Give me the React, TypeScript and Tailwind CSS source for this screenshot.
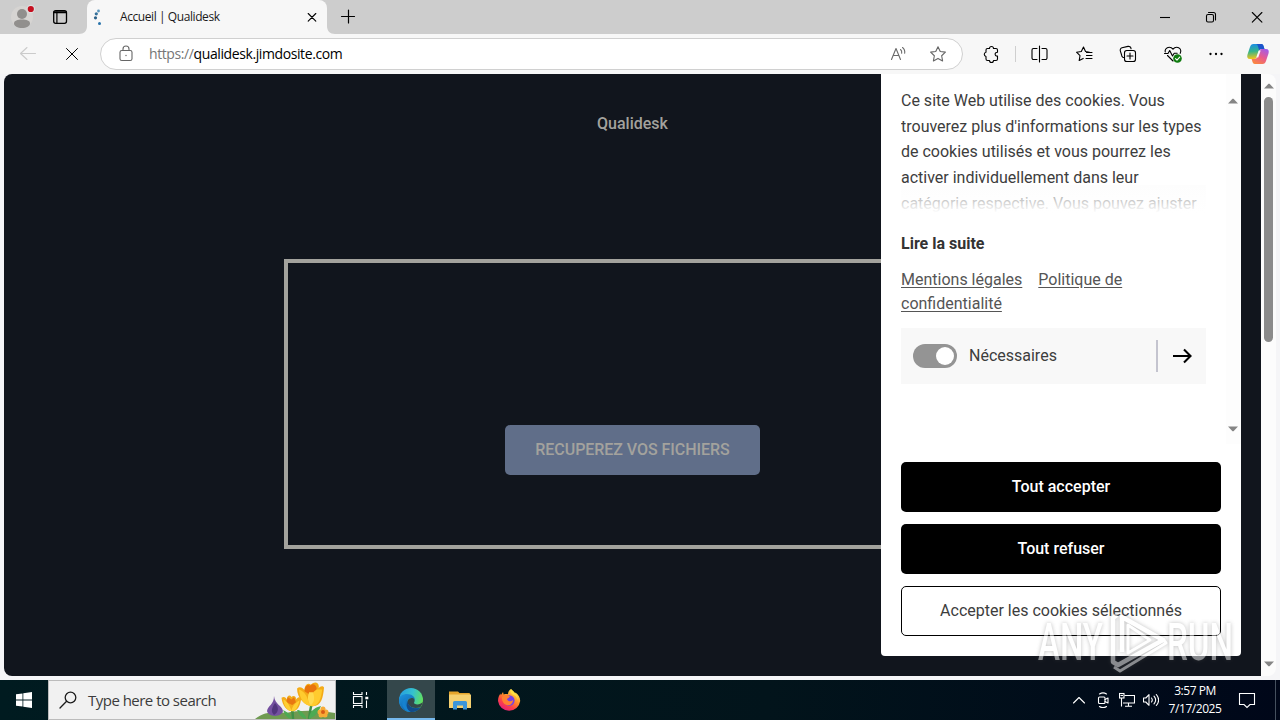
import React from 'react';

type IconProps = { children: React.ReactNode; size?: number; className?: string };

const sizes: Record<number, string> = {
  12: 'h-3 w-3',
  16: 'h-4 w-4',
  20: 'h-5 w-5',
  24: 'h-6 w-6',
  28: 'h-7 w-7',
};

function Icon({ children, size = 20, className = '' }: IconProps) {
  return (
    <svg
      viewBox={`0 0 ${size} ${size}`}
      className={`${sizes[size]} shrink-0 ${className}`}
      fill="none"
      stroke="currentColor"
      strokeWidth="1.1"
      strokeLinecap="round"
      strokeLinejoin="round"
    >
      {children}
    </svg>
  );
}

function Slot({ w, children }: { w: string; children?: React.ReactNode }) {
  return <div className={`flex h-full shrink-0 items-center justify-center ${w}`}>{children}</div>;
}

function TitleBar() {
  return (
    <div className="flex h-[34px] shrink-0 bg-[#cdcdcd]">
      <Slot w="w-11">
        <Icon size={28}>
          <circle cx="14" cy="14" r="11" fill="#d6d4d2" stroke="none" />
          <circle cx="14" cy="11" r="5" fill="#918f8d" stroke="none" />
          <path d="M6 20.500c0-3 3.500-4 8-4s8 1 8 4c0 2.500-3.500 4.500-8 4.500s-8-2-8-4.500z" fill="#918f8d" stroke="none" />
          <circle cx="22.800" cy="6" r="4.200" fill="#dedede" stroke="none" />
          <circle cx="22.800" cy="6" r="3.100" fill="#c50f1f" stroke="none" />
        </Icon>
      </Slot>
      <Slot w="w-8">
        <Icon size={16}>
          <rect x="1.700" y="1.700" width="12.800" height="12.600" rx="2" strokeWidth="1.300" />
          <path d="M2.200 3.200h11.800" strokeWidth="2" />
          <path d="M4.900 3v11" strokeWidth="1.200" />
        </Icon>
      </Slot>
      <div className="flex w-[11px] items-end">
        <svg viewBox="0 0 11 8" className="h-2 w-[11px]">
          <path d="M3 8c5 0 8-3 8-8v8z" fill="#f7f7f7" />
        </svg>
      </div>
      <div className="flex w-60 items-center rounded-t-lg bg-[#f7f7f7]">
        <Icon size={20} className="ml-0.5">
          <circle cx="9.500" cy="4" r="1.400" fill="#5b96bd" stroke="none" />
          <circle cx="7.300" cy="6.800" r="1.600" fill="#35719b" stroke="none" />
          <circle cx="6.500" cy="10.800" r="1.600" fill="#2b6189" stroke="none" />
          <circle cx="10.500" cy="16.500" r="1.500" fill="#2873ab" stroke="none" />
        </Icon>
        <span className="ml-[11px] flex-1 whitespace-nowrap font-['Open_Sans','Noto_Sans',sans-serif] text-[12px] tracking-[-0.42px] text-[#1a1a1a]">
          Accueil | Qualidesk
        </span>
        <Icon size={12} className="mr-[9px] text-black">
          <path d="M2.200 2.500l7.600 7.600M9.800 2.500l-7.600 7.600" />
        </Icon>
      </div>
      <div className="flex w-[9px] items-end">
        <svg viewBox="0 0 9 8" className="h-2 w-[9px]">
          <path d="M0 0c0 5 3 8 8 8H0z" fill="#f7f7f7" />
        </svg>
      </div>
      <Slot w="w-6">
        <Icon size={20} className="text-black">
          <path d="M3.500 9.500h13M10.500 3v13" strokeWidth="1.200" />
        </Icon>
      </Slot>
      <div className="flex-1" />
      <div className="flex text-black">
        <Slot w="w-[46px]">
          <Icon size={12}><path d="M1 6.500h10" strokeLinecap="butt" /></Icon>
        </Slot>
        <Slot w="w-[46px]">
          <Icon size={12}>
            <rect x="1.500" y="3.500" width="7" height="7.500" rx="1.500" />
            <path d="M3.500 1.500h5a2 2 0 0 1 2 2V9" />
          </Icon>
        </Slot>
        <Slot w="w-[46px]">
          <Icon size={12}><path d="M1.300 1.500l9.600 9.600M10.900 1.500l-9.600 9.600" /></Icon>
        </Slot>
      </div>
    </div>
  );
}

function Toolbar() {
  return (
    <div className="flex h-10 shrink-0 items-center bg-[#f7f7f7] text-[#1b1b1b]">
      <Slot w="w-14">
        <Icon className="text-[#cbcbcb]">
          <path d="M17.500 9.500H2.800M9 3.500l-6.500 6 6.500 6" />
        </Icon>
      </Slot>
      <Slot w="w-8">
        <Icon className="text-black"><path d="M4.500 4.500l11 11M15.500 4.500l-11 11" strokeWidth="1" /></Icon>
      </Slot>
      <div className="ml-3 flex h-8 w-[863px] items-center rounded-full border border-[#d0d0d0] bg-white text-[#666]">
        <Icon className="ml-[15px]">
          <rect x="4" y="6.500" width="12" height="10" rx="1.800" />
          <path d="M7 6.500V5a3 3 0 0 1 6 0v1.500" />
          <circle cx="10" cy="11.500" r="0.700" fill="currentColor" stroke="none" />
        </Icon>
        <span className="mb-px ml-[13px] flex-1 whitespace-nowrap font-['Open_Sans','Noto_Sans',sans-serif] text-[14px] tracking-[-0.4px] text-black">
          <span className="text-[#767676]">https://</span>qualidesk.jimdosite.com
        </span>
        <Icon className="text-[#6b6b6b]">
          <path d="M2.500 15.500L7 4.500l4.500 11M4.200 11.500h5.700" />
          <path d="M11.500 5.500c1 .8 1.400 2.300 1.200 3.800M13.500 3.500c1.800 1.300 2.500 3.500 2.200 5.800" />
        </Icon>
        <Icon className="ml-[19px] mr-[14px]">
          <path d="M10 2.700l2.250 4.750 5.150.7-3.750 3.600.95 5.150L10 14.400l-4.600 2.500.95-5.150L2.600 8.150l5.150-.7z" />
        </Icon>
      </div>
      <div className="ml-1.5 flex h-full items-center">
        <Slot w="w-11">
          <Icon className="text-black">
            <path d="M8.500 4.500a2 2 0 0 1 4 0h2.500a1.500 1.500 0 0 1 1.500 1.500v2.300h-.5a1.900 1.900 0 0 0 0 3.800h.5V15a1.500 1.500 0 0 1-1.500 1.500h-2.500a2 2 0 0 1-4 0H6.500A1.500 1.500 0 0 1 5 15v-2.500a2.200 2.200 0 0 1 0-4.300V6a1.500 1.500 0 0 1 1.500-1.500z" />
          </Icon>
        </Slot>
        <div className="mx-0.5 h-4 w-px bg-[#cfcfcf]" />
        <Slot w="w-11">
          <Icon className="text-black">
            <path d="M9.500 2v16M7 4.500H3.500A1.500 1.500 0 0 0 2 6v8a1.500 1.500 0 0 0 1.500 1.500H7M12 4.500h3.500A1.500 1.500 0 0 1 17 6v8a1.500 1.500 0 0 1-1.500 1.500H12" />
          </Icon>
        </Slot>
        <Slot w="w-11">
          <Icon className="text-black">
            <path d="M15.500 8.200l-4-.7L9.500 3 7.300 7.500l-4.800.7L6 11.600l-.8 4.900 4-2.100M12.500 8.500H18M12.500 11.500H18M12 14.500h6" />
          </Icon>
        </Slot>
        <Slot w="w-11">
          <Icon className="text-black">
            <path d="M5.500 13.500l-.7-.3A2.500 2.500 0 0 1 3.600 11L2.300 6.800A2.500 2.500 0 0 1 4 3.700l6-1.300a2.500 2.500 0 0 1 3 2v.3" />
            <rect x="6.500" y="6.500" width="11" height="11" rx="2.300" />
            <path d="M12 9v6M9 12h6" />
          </Icon>
        </Slot>
        <Slot w="w-[45px]">
          <Icon className="text-black">
            <path d="M10 5.200C8 2.500 4.500 2.600 2.800 5c-.7 1-.8 2-.6 3M10 5.200c2-2.700 5.500-2.600 7.200-.2.900 1.300.8 2.900 0 4.300M4.500 11.500L10 17" />
            <path d="M1.500 9.500H5l1.700-3L9.500 12l1.700-2.700h3" />
            <circle cx="14.500" cy="14.500" r="4.300" fill="#107c10" stroke="none" />
            <path d="M12.500 14.600l1.500 1.500 2.700-2.900" stroke="#fff" />
          </Icon>
        </Slot>
        <Slot w="w-[42px]">
          <Icon className="text-black">
            <g fill="currentColor" stroke="none">
              <circle cx="4.500" cy="10" r="1.150" />
              <circle cx="10" cy="10" r="1.150" />
              <circle cx="15.500" cy="10" r="1.150" />
            </g>
          </Icon>
        </Slot>
        <Slot w="w-[42px]">
          <Icon size={24}>
            <defs>
              <linearGradient id="copA" x1="0.200" y1="0" x2="0.300" y2="1">
                <stop offset="0" stopColor="#1a8de8" />
                <stop offset="0.500" stopColor="#35b58a" />
                <stop offset="1" stopColor="#f5c518" />
              </linearGradient>
              <linearGradient id="copB" x1="0.800" y1="0" x2="0.200" y2="1">
                <stop offset="0" stopColor="#a35be8" />
                <stop offset="0.500" stopColor="#ea5a8c" />
                <stop offset="1" stopColor="#fb8a3c" />
              </linearGradient>
            </defs>
            <path d="M7.500 2H15c2 0 2.300 1.300 2.900 3.500l.5 1.500h-3c-1.500 0-2.200.8-2.700 2.500l-1.200 4c-.7 2.400-1.300 3.500-3.500 3.500H4c-2.500 0-3.300-1.800-2.500-4.500L4 5c.7-2 1.500-3 3.500-3z" fill="url(#copA)" stroke="none" />
            <path d="M14 2h1.500c1.500 0 2 1.500 2.500 3.500l.5 1.500h-3c-1 0-1.800.3-2.300 1.500L12 4.500C11.700 3 11 2 10 2z" fill="#1c54cb" stroke="none" />
            <path d="M16.500 22H9c-2 0-2.300-1.300-2.900-3.500L5.600 17h3c1.500 0 2.200-.8 2.700-2.500l1.200-4C13.200 8.100 13.800 7 16 7h4c2.500 0 3.300 1.800 2.500 4.500L20 19c-.7 2-1.500 3-3.500 3z" fill="url(#copB)" stroke="none" />
            <path d="M12.700 8.500h2l-2.500 7h-2z" fill="#f7f7f7" stroke="none" />
          </Icon>
        </Slot>
      </div>
    </div>
  );
}

function Arrow({ down = false }: { down?: boolean }) {
  return (
    <svg viewBox="0 0 10 6" className={`h-1.5 w-2.5 ${down ? 'rotate-180' : ''}`}>
      <path d="M0 5.500L4.500 .7h1L10 5.500z" fill="#858585" />
    </svg>
  );
}

function CookiePanel() {
  return (
    <aside className="absolute right-5 top-0 flex h-[582px] w-[360px] flex-col rounded-b bg-white font-['Roboto',sans-serif] text-[16px] font-normal text-[#3d3d3d]">
      <div className="flex h-[370px]">
        <div className="flex w-[345px] flex-col pl-5">
          <div className="relative mt-[14px] h-[125px] w-[305px] overflow-hidden leading-[25.7px]">
            <p className="whitespace-nowrap">
              Ce site Web utilise des cookies. Vous<br />
              trouverez plus d'informations sur les types<br />
              de cookies utilisés et vous pourrez les<br />
              activer individuellement dans leur<br />
              catégorie respective. Vous pouvez ajuster
            </p>
            <div className="absolute inset-x-0 bottom-0 h-7 bg-gradient-to-b from-[#fafafa]/40 to-white" />
          </div>
          <span className="mt-[19px] font-bold leading-6 text-[#333]">Lire la suite</span>
          <p className="mt-3 w-[290px] leading-6 text-[#555]">
            <a className="mr-4 underline underline-offset-2">Mentions légales</a>
            <a className="underline underline-offset-2">Politique de<br />confidentialité</a>
          </p>
          <div className="mt-3 flex h-14 w-[305px] items-center bg-[#f8f8f8] pl-3">
            <div className="flex h-6 w-11 items-center justify-end rounded-full bg-[#949494] pr-[3px]">
              <div className="h-[18px] w-[18px] rounded-full bg-white" />
            </div>
            <span className="ml-3 flex-1">Nécessaires</span>
            <div className="h-8 w-0.5 bg-[#c4c4cf]" />
            <Icon size={24} className="ml-3 mr-3 text-black">
              <path d="M3 12h17M14 5.500l6.500 6.500-6.500 6.500" strokeWidth="2.100" strokeLinecap="butt" strokeLinejoin="miter" />
            </Icon>
          </div>
        </div>
        <div className="flex w-[15px] flex-col items-start justify-between bg-[#fdfdfd] pb-3 pl-0.5 pt-6">
          <Arrow />
          <Arrow down />
        </div>
      </div>
      <div className="flex flex-col gap-3 px-5 pt-[18px]">
        <button className="h-[50px] rounded-[5px] bg-black font-medium text-white">Tout accepter</button>
        <button className="h-[50px] rounded-[5px] bg-black font-medium text-white">Tout refuser</button>
        <button className="h-[50px] rounded-[5px] border border-black bg-white">Accepter les cookies sélectionnés</button>
      </div>
    </aside>
  );
}

function Viewport() {
  return (
    <div className="flex h-[606px] shrink-0 bg-[#f5f5f7] pb-1 pl-1 pr-1">
      <div className="flex w-full overflow-hidden rounded-lg">
        <main className="relative flex w-[1257px] flex-col items-center bg-[#11151d] font-['Roboto',sans-serif] text-[16px] font-medium text-[#a3a29d]">
          <span className="mt-[38px] leading-6">Qualidesk</span>
          <div className="mt-[123px] flex h-[290px] w-[697px] flex-col items-center border-4 border-[#a3a29d] pt-[162px]">
            <button className="h-[50px] w-[255px] rounded-[5px] bg-[#606e89] tracking-[-0.05px]">RECUPEREZ VOS FICHIERS</button>
          </div>
          <CookiePanel />
        </main>
        <div className="flex flex-1 flex-col items-center bg-[#fcfcfc] pb-[9px] pt-[9px]">
          <Arrow />
          <div className="mt-2 h-[245px] w-[9px] rounded-full bg-[#8b8b8b]" />
          <div className="flex-1" />
          <Arrow down />
        </div>
      </div>
    </div>
  );
}

function Flowers() {
  return (
    <svg viewBox="0 0 80 38" className="h-[38px] w-20 self-end">
      <path d="M0 38c9-7 20-8 31-6 12-3 31-3 49 0v6z" fill="#6f9a51" />
      <g transform="translate(4 4)">
        <path d="M15 11c0 9-6 9-7 15 1 6 14 7 16 0-1-6-8-6-9-15z" fill="#7450a0" />
        <path d="M16 18c-4 6-4 9-1 12 5-3 5-8 1-12z" fill="#51357d" />
      </g>
      <path d="M38 38c0-6-1-10-2-13M54 38c1-8 2-15 4-18" stroke="#409047" strokeWidth="2.500" fill="none" />
      <path d="M36 37c-1-5-6-7-8-8 2 5 4 8 8 9zM54 36c2-8 8-10 12-11-2 5-5 10-12 13zM51 36c-4-6-6-7-9-7 2 5 5 8 9 9z" fill="#4caa53" />
      <g transform="translate(4 1.500) scale(0.900)">
        <path d="M25 17c3-2 5 0 6 2 0-4 3-6 5-3 2-2 6-1 5 3 2-3 5-3 6-2-1 9-4 15-10 15s-11-6-12-15z" fill="#f3ad1c" />
        <path d="M30 22l2-6 4 3 3-3 2 6-4 3z" fill="#e87812" />
        <path d="M27 19c5 2 7 7 9 12 2-6 5-9 9-11-2 8-4 11-8 12-5 0-9-5-10-13z" fill="#ffd034" />
      </g>
      <g transform="translate(3 1) scale(0.930)">
        <path d="M42 7c3-3 7 0 8 2 0-5 3-9 7-6 4-5 10-2 8 4 2-3 5-3 6-1-1 11-3 20-12 20S42 17 42 7z" fill="#f4ab17" />
        <path d="M50 10c0-6 4-8 6-6 4-4 8 0 7 6l-7 4z" fill="#e9740c" />
        <path d="M44 8c6 2 9 7 11 15 0-7 3-12 8-15l6 0c-1 10-4 17-10 18-9 0-14-7-15-18z" fill="#ffcb2e" />
        <path d="M55 11c-2 5-2 10 2 14 4-4 4-9 2-14z" fill="#ffda4e" />
      </g>
      <g fill="#f7ab36">
        <circle cx="68" cy="28" r="2.500" /><circle cx="71" cy="31" r="2.500" /><circle cx="70" cy="34" r="2.500" />
        <circle cx="66" cy="34" r="2.500" /><circle cx="65" cy="31" r="2.500" />
      </g>
      <circle cx="68" cy="31" r="2" fill="#d85b16" />
    </svg>
  );
}

function Taskbar() {
  return (
    <div className="flex h-10 shrink-0 bg-gradient-to-r from-[#001b20] via-[#02141b] via-60% to-[#000719] font-['Open_Sans','Noto_Sans',sans-serif] text-white">
      <Slot w="w-12">
        <Icon size={16} className="text-white">
          <path d="M0 2.300l6.500-.9v6.200H0zM7.300 1.300L16 0v7.600H7.300zM0 8.400h6.500v6.200L0 13.700zM7.300 8.400H16V16l-8.700-1.300z" fill="#fff" stroke="none" />
        </Icon>
      </Slot>
      <div className="flex w-72 items-center border border-[#bcbcbc] bg-[#f1f1f1]">
        <Icon size={20} className="ml-[9px] text-[#1d1d1d]">
          <circle cx="12.500" cy="7.500" r="5.300" strokeWidth="1.300" />
          <path d="M8.600 11.300L2 18" strokeWidth="1.300" />
        </Icon>
        <span className="ml-2.5 flex-1 whitespace-nowrap text-[15px] tracking-[-0.52px] text-[#3c3c3c]">Type here to search</span>
        <Flowers />
      </div>
      <div className="flex">
        <Slot w="w-[47px]">
          <Icon size={20}>
            <g strokeLinecap="butt" strokeLinejoin="miter">
              <rect x="3.500" y="6.500" width="8.500" height="7" />
              <path d="M3.500 2v2.500H12V2M3.500 18v-2.500H12V18M16.500 2v3M16.500 10.500V18" />
              <path d="M15.300 8h3" strokeWidth="2.500" />
            </g>
          </Icon>
        </Slot>
        <div className="ml-1 flex w-12 flex-col items-center justify-between border-b-2 border-[#76b9ed] bg-[#34474b]">
          <svg viewBox="0 0 24 24" className="mt-2 h-6 w-6">
            <defs>
              <linearGradient id="edgeTop" x1="0" y1="0.300" x2="1" y2="0.600">
                <stop offset="0" stopColor="#269fe0" />
                <stop offset="0.500" stopColor="#35c1cf" />
                <stop offset="1" stopColor="#66e352" />
              </linearGradient>
              <linearGradient id="edgeSide" x1="0" y1="0" x2="0.700" y2="1">
                <stop offset="0" stopColor="#1e95df" />
                <stop offset="1" stopColor="#0c59a4" />
              </linearGradient>
            </defs>
            <circle cx="12" cy="12" r="12" fill="url(#edgeTop)" />
            <path d="M0 12c0-4 4-6 8-6 5 0 8 3 8 6-1-1-2-2-4-2-3 0-4.500 3-3 6 2 4 8 5 12.500 3C19 22.500 16 24 12 24 5 24 0 19 0 12z" fill="url(#edgeSide)" />
            <path d="M9 9.500C5 12 6 21 12 24 7 24 2 19 3.500 14 4.500 11 6.500 10 9 9.500z" fill="#1682d0" />
            <path d="M12.500 10c3 0 3.500 2 3 3.500-.5 1-.8 1.500.2 2.200 2 1.300 6 .8 8-1.700-.4 2-1 3.500-2.200 5-4.500 2-10.500 1-12.500-3-1.500-3 .5-6 3.500-6z" fill="#34474b" />
            <path d="M9 12.500c-1 4 3 8 8 8 2 0 4-.5 5-1.500-2 3.300-6 5-10 5-4-2-5.500-7-3-11.500z" fill="#134b88" />
          </svg>
        </div>
        <Slot w="w-[49px]">
          <Icon size={24}>
            <g stroke="none">
              <path d="M1 3.500h9l1.500 1.500H21a1 1 0 0 1 1 1v13H1z" fill="#e5a52c" />
              <path d="M1 6.500h22v13.500H1z" fill="#f5d070" />
              <path d="M5 21.500v-7a1.500 1.500 0 0 1 1.500-1.500h11a1.500 1.500 0 0 1 1.500 1.500v7h-4v-4H9v4z" fill="#3b95d9" />
            </g>
          </Icon>
        </Slot>
        <Slot w="w-[49px]">
          <Icon size={24}>
            <defs>
              <linearGradient id="foxBody" x1="0.850" y1="0" x2="0.200" y2="1">
                <stop offset="0.100" stopColor="#ffe14a" />
                <stop offset="0.450" stopColor="#ff8b2a" />
                <stop offset="0.700" stopColor="#fb4048" />
                <stop offset="1" stopColor="#e21a83" />
              </linearGradient>
            </defs>
            <g stroke="none">
              <path d="M14 1c1 1.500 3 2.500 4 4.500l.5-1c3 2 4.700 5 4.700 8.500A11.200 11.200 0 0 1 1 13c0-3 1-6 2.500-7.500l.3 1.800L6 4l.7 2.500C8 6 9.500 6 11 6.200 11 4 12 2 14 1z" fill="url(#foxBody)" />
              <circle cx="12.300" cy="12.500" r="5.300" fill="#7542e5" />
              <path d="M5 9c2-2.500 6-2.800 8-.5-1 1.500-2.500 1.500-3 3 1.500 2.500 4 2 6 .5 0 4-3.500 6-6.500 5C6 15.800 4.500 12 5 9z" fill="#ff8131" />
              <path d="M14 1c3 3 7 6 7 11-1-3-3-5-5.500-5.500C13.500 5 13 3 14 1z" fill="#ffdf40" />
            </g>
          </Icon>
        </Slot>
      </div>
      <div className="flex-1" />
      <div className="flex">
        <Slot w="w-6"><Icon size={16}><path d="M2.500 11L8 5.500l5.500 5.500" /></Icon></Slot>
        <Slot w="w-6">
          <Icon size={16}>
            <rect x="3.500" y="5" width="6.500" height="6.500" rx="1" />
            <path d="M10 7.500L13 6v5l-3-1.500M4.500 2c2-1.300 5-1.300 7 0M4.500 14.500c2 1.300 5 1.300 7 0" />
          </Icon>
        </Slot>
        <Slot w="w-6">
          <Icon size={16}>
            <g strokeLinecap="butt" strokeLinejoin="miter">
              <path d="M5.500 3.500h10v7.500H4M9.500 11v3M6 14.200h7M2.500 6v8.500" />
              <rect x="0.500" y="1.500" width="4.500" height="4.500" />
              <path d="M1.500 3.500h2.500" />
            </g>
          </Icon>
        </Slot>
        <Slot w="w-6">
          <Icon size={16}>
            <path d="M.5 6h2.300L6 2.700v10.600L2.800 10H.5zM8.500 6c1 1.300 1 2.700 0 4M11 4.200c2 2.300 2 5.300 0 7.600M13.300 2.500c3 3.500 3 7.500 0 11" />
          </Icon>
        </Slot>
        <div className="flex w-16 flex-col items-center pt-0.5 text-[12px] leading-[18px] tracking-[-0.45px]">
          <span>3:57 PM</span>
          <span>7/17/2025</span>
        </div>
        <Slot w="w-10">
          <Icon size={20}>
            <path d="M2.500 3.500h15v11h-4.500L10 17.500l-3-3H2.500z" strokeLinejoin="miter" />
          </Icon>
        </Slot>
        <div className="ml-2 h-full w-px bg-[#45505e]" />
        <div className="w-1" />
      </div>
    </div>
  );
}

function Watermark() {
  return (
    <svg viewBox="0 0 204 70" className="pointer-events-none absolute left-[1034px] top-[606px] h-[70px] w-[204px] opacity-50 drop-shadow-[0_0_2px_rgba(80,80,80,0.7)]">
      <g fill="#fff" className="font-['Roboto',sans-serif] text-[51px] font-medium">
        <text x="4" y="53.500" textLength="65" lengthAdjust="spacingAndGlyphs">ANY</text>
        <text x="133" y="53.500" textLength="66" lengthAdjust="spacingAndGlyphs">RUN</text>
      </g>
      <g fill="none" stroke="#fff" strokeLinejoin="round">
        <path d="M88 46V11l41 23-45 25-5-3V12l4-3" strokeWidth="4.500" />
        <path d="M94 19v28l22-13zM80 61l6 4 46-28-3-4" strokeWidth="3" />
      </g>
    </svg>
  );
}

export default function App() {
  return (
    <div className="relative flex h-[720px] w-[1280px] flex-col overflow-hidden">
      <TitleBar />
      <Toolbar />
      <Viewport />
      <Taskbar />
      <Watermark />
    </div>
  );
}
